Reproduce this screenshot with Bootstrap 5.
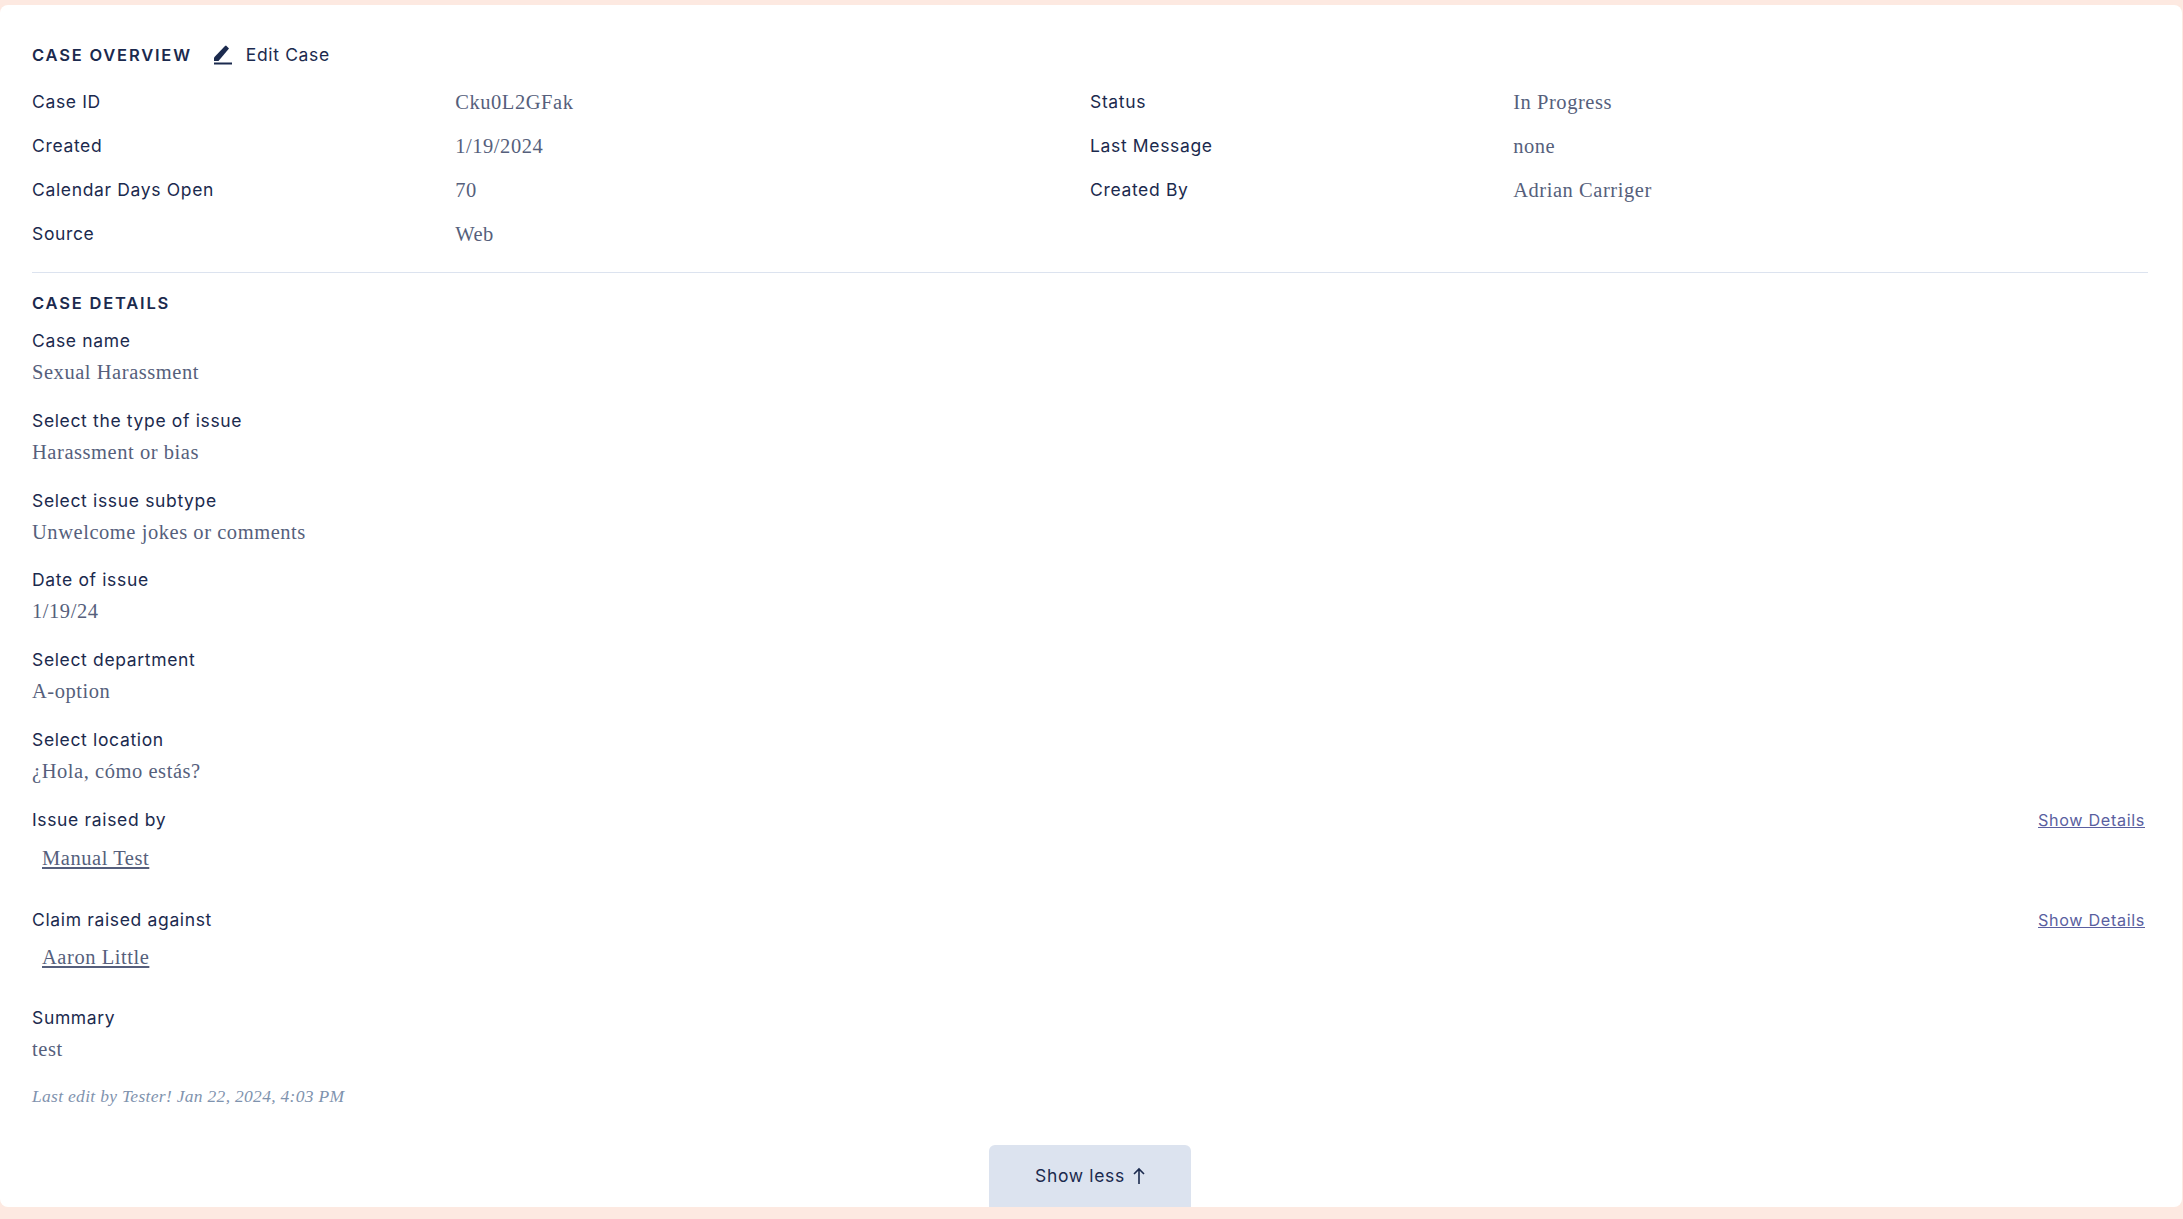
<!DOCTYPE html>
<html lang="en">
<head>
<meta charset="UTF-8" />
<title>Case Overview</title>
<link href="https://cdn.jsdelivr.net/npm/bootstrap@5.3.3/dist/css/bootstrap.min.css" rel="stylesheet">
<style>
    body {
    background-color: #fde9e1;
    color: #1b2a4e;
    font-family: Inter, "Liberation Sans", sans-serif;
    font-size: 17.5px;
    letter-spacing: .65px;
    overflow: hidden;
    }
    .case-panel {
    background-color: #fff;
    margin: 5px 1px 0 0;
    height: 1202px;
    padding: 37px 34px 0 32px;
    border-radius: 8px;
    }
    .sec-title {
    font-size: 16.5px;
    font-weight: 600;
    letter-spacing: 1.8px;
    line-height: 24px;
    margin: 0;
    }
    .edit-link {
    color: #1b2a4e;
    text-decoration: none;
    margin-left: 22px;
    }
    .edit-link svg { margin-right: 14px; }
    .over-head { margin-bottom: 22px; }
    .over-row {
    line-height: 24px;
    margin-bottom: 20px;
    }
    .over-label { width: 40%; }
    .val-text {
    font-family: "Liberation Serif", serif;
    font-size: 20.5px;
    letter-spacing: .55px;
    color: #565f7c;
    line-height: 24px;
    }
    .val-text a { color: #565f7c; }
    .case-rule {
    border-color: #dce3ef;
    opacity: 1;
    margin: 6px 0 18px;
    }
    .details-title { margin-bottom: 14px; }
    .detail-item { margin-bottom: 24.7px; }
    .detail-label { line-height: 24px; margin-bottom: 7px; }
    .person-item { margin-bottom: 37px; }
    .person-link { padding: 12px 0 0 10px; }
    .details-link {
    color: #5a5fa0;
    font-size: 16.2px;
    margin-right: 3px;
    }
    .summary-item { margin-bottom: 23px; }
    .edit-note {
    font-family: "Liberation Serif", serif;
    font-style: italic;
    font-size: 17.5px;
    letter-spacing: .3px;
    color: #7f93ae;
    line-height: 24px;
    }
    .less-btn {
    width: 202px;
    height: 62px;
    background-color: #dce3ef;
    color: #1b2a4e;
    border: 0;
    border-radius: 6px 6px 0 0;
    font-size: 17.5px;
    letter-spacing: .65px;
    }
    .less-wrap {
    position: absolute;
    left: 989px;
    top: 1145px;
    }
</style>
</head>
<body>
<div class="case-panel">
    <div class="d-flex align-items-center over-head">
    <h2 class="sec-title">CASE OVERVIEW</h2>
    <a href="#" class="edit-link d-flex align-items-center">
        <svg width="18" height="20" viewBox="0 0 18 20"><path d="M0 16V12.5L11 1 12 .5 15 3.5 4.5 16Z" fill="#1b2a4e"/><rect y="17.5" width="18" height="2" fill="#1b2a4e"/></svg>
        Edit Case
    </a>
    </div>

    <div class="row gx-0">
    <div class="col-6">
        <div class="d-flex over-row"><div class="over-label">Case ID</div><div class="val-text">Cku0L2GFak</div></div>
        <div class="d-flex over-row"><div class="over-label">Created</div><div class="val-text">1/19/2024</div></div>
        <div class="d-flex over-row"><div class="over-label">Calendar Days Open</div><div class="val-text">70</div></div>
        <div class="d-flex over-row"><div class="over-label">Source</div><div class="val-text">Web</div></div>
    </div>
    <div class="col-6">
        <div class="d-flex over-row"><div class="over-label">Status</div><div class="val-text">In Progress</div></div>
        <div class="d-flex over-row"><div class="over-label">Last Message</div><div class="val-text">none</div></div>
        <div class="d-flex over-row"><div class="over-label">Created By</div><div class="val-text">Adrian Carriger</div></div>
    </div>
    </div>

    <hr class="case-rule">
    <h2 class="sec-title details-title">CASE DETAILS</h2>

    <div class="detail-item"><div class="detail-label">Case name</div><div class="val-text">Sexual Harassment</div></div>
    <div class="detail-item"><div class="detail-label">Select the type of issue</div><div class="val-text">Harassment or bias</div></div>
    <div class="detail-item"><div class="detail-label">Select issue subtype</div><div class="val-text">Unwelcome jokes or comments</div></div>
    <div class="detail-item"><div class="detail-label">Date of issue</div><div class="val-text">1/19/24</div></div>
    <div class="detail-item"><div class="detail-label">Select department</div><div class="val-text">A-option</div></div>
    <div class="detail-item"><div class="detail-label">Select location</div><div class="val-text">¿Hola, cómo estás?</div></div>

    <div class="person-item">
    <div class="d-flex justify-content-between align-items-center"><div>Issue raised by</div><a href="#" class="details-link">Show Details</a></div>
    <div class="val-text person-link"><a href="#">Manual Test</a></div>
    </div>
    <div class="person-item">
    <div class="d-flex justify-content-between align-items-center"><div>Claim raised against</div><a href="#" class="details-link">Show Details</a></div>
    <div class="val-text person-link"><a href="#">Aaron Little</a></div>
    </div>

    <div class="summary-item"><div class="detail-label">Summary</div><div class="val-text">test</div></div>
    <div class="edit-note">Last edit by Tester! Jan 22, 2024, 4:03 PM</div>

    <div class="less-wrap">
    <button class="btn less-btn d-flex align-items-center justify-content-center gap-2">Show less
        <svg width="12" height="18" viewBox="0 0 12 18"><path d="M6 17V2M1 7l5-5 5 5" fill="none" stroke="#1b2a4e" stroke-width="1.6"/></svg>
    </button>
    </div>
</div>
</body>
</html>
